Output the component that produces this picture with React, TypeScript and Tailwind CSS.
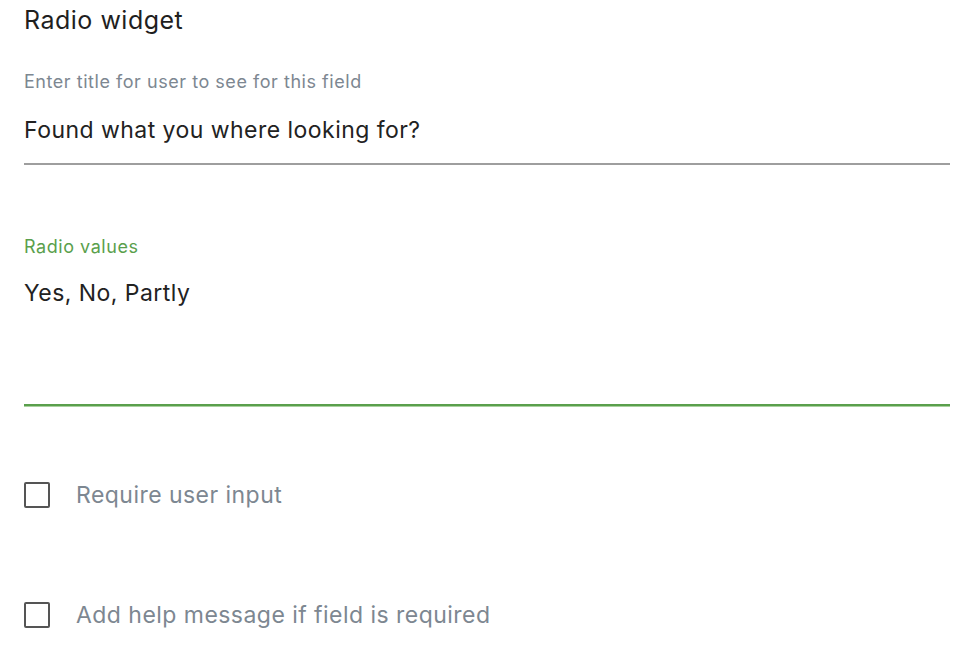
export default function App() {
  return (
    <div className="min-h-screen bg-white font-['Inter',sans-serif] text-[#222]">
      <div className="w-[950px] pl-6 pt-[3px]">
        <h2 className="text-[25px] leading-[34px] tracking-[0.02em] text-[#1f1f1f]">Radio widget</h2>

        {/* title field */}
        <div className="mt-[33px]">
          <label className="block text-[18px] leading-[24px] tracking-[0.03em] text-[#7d8791]">
            Enter title for user to see for this field
          </label>
          <div className="mt-[21px] border-b-2 border-[#9e9e9e] pb-[18px] text-[23px] leading-[30px] tracking-[0.02em] text-[#222]">
            Found what you where looking for?
          </div>
        </div>

        {/* radio values */}
        <div className="mt-[70px]">
          <label className="block text-[18px] leading-[24px] tracking-[0.03em] text-[#5a9f4c]">Radio values</label>
          <div className="mt-[19px] h-[128px] border-b-2 border-[#5a9f4c] text-[23px] leading-[30px] tracking-[0.02em] text-[#222] shadow-[0_1px_0_#a9d19f]">
            Yes, No, Partly
          </div>
        </div>

        <div className="mt-[76px] flex flex-col gap-[94px]">
          <label className="flex items-center gap-[26px] text-[23px] leading-[26px] tracking-[0.02em] text-[#7d8791]">
            <span className="h-[26px] w-[26px] shrink-0 rounded-[2px] border-2 border-[#555]" />
            Require user input
          </label>
          <label className="flex items-center gap-[26px] text-[23px] leading-[26px] tracking-[0.02em] text-[#7d8791]">
            <span className="h-[26px] w-[26px] shrink-0 rounded-[2px] border-2 border-[#555]" />
            Add help message if field is required
          </label>
        </div>
      </div>
    </div>
  );
}
